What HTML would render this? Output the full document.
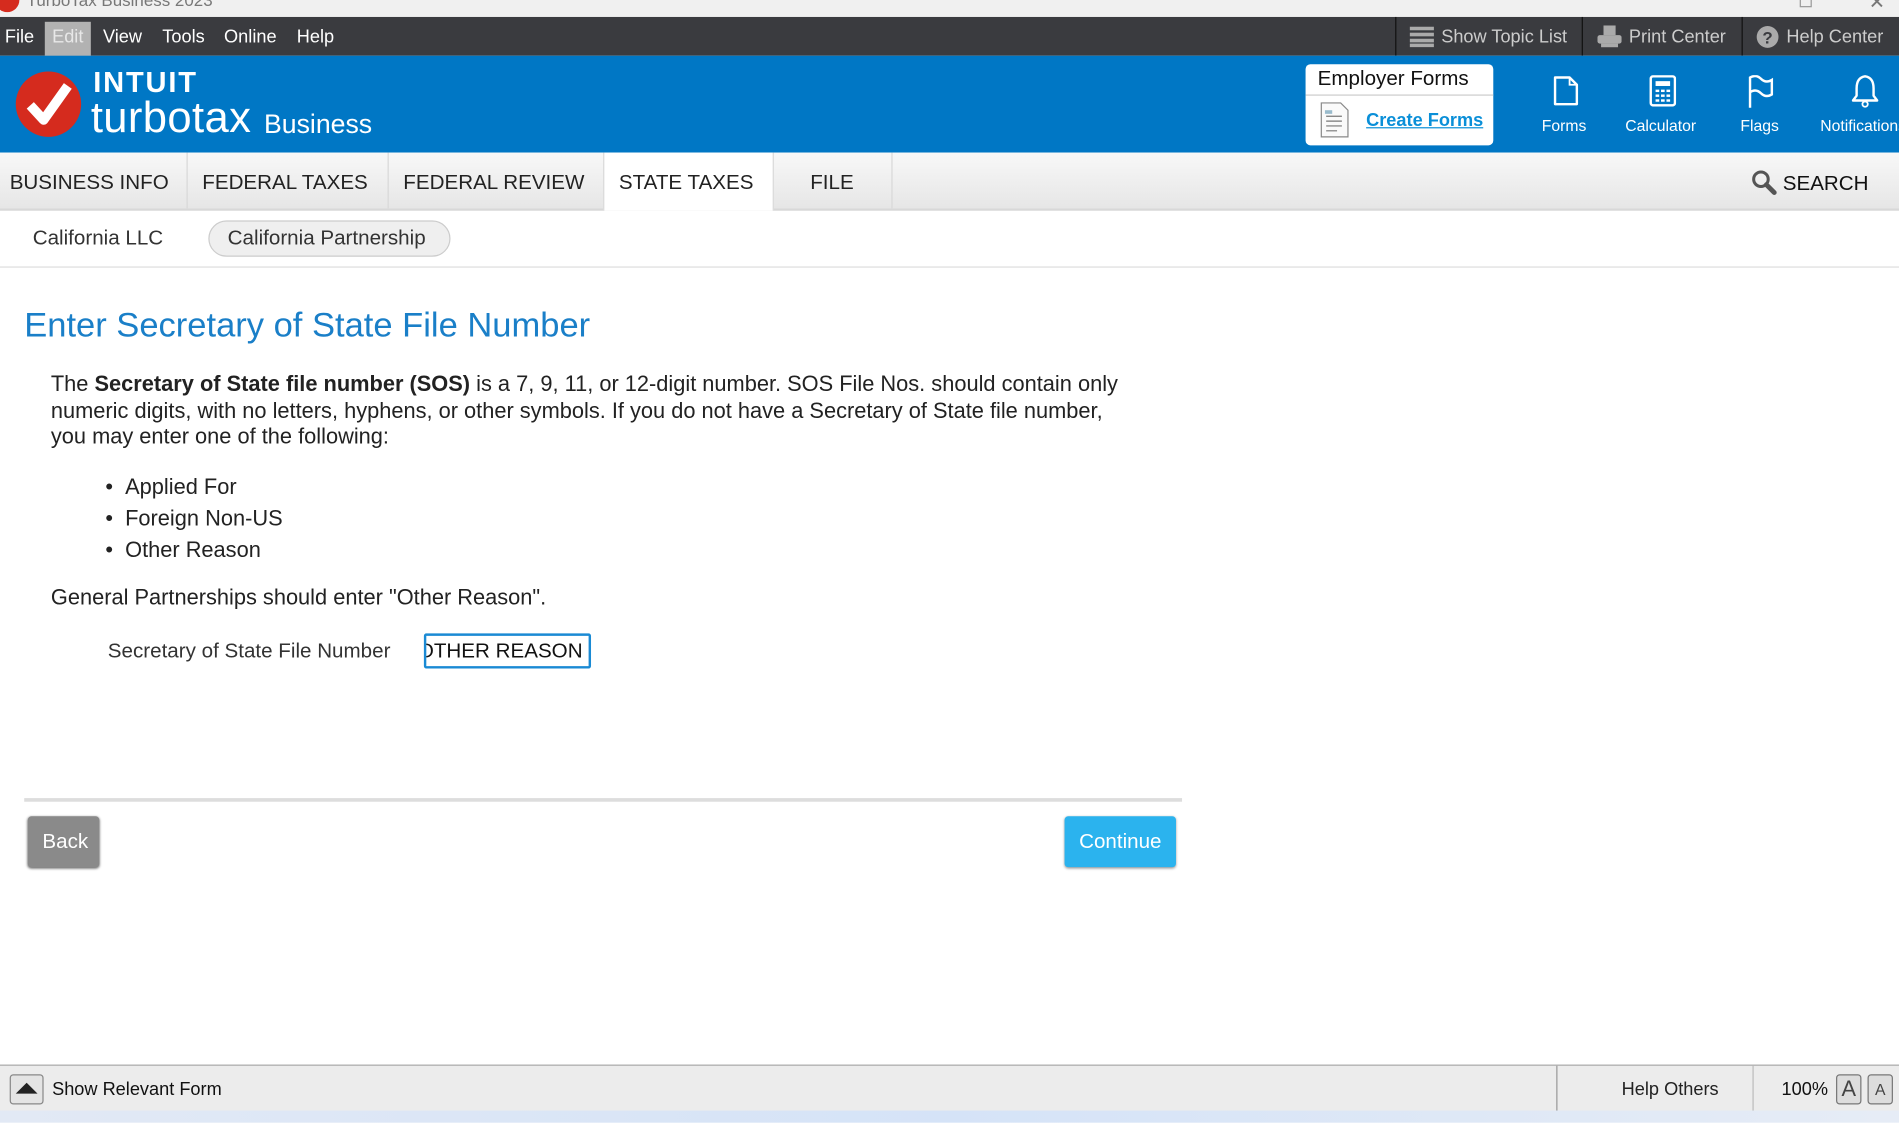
<!DOCTYPE html>
<html><head><meta charset="utf-8">
<style>
html,body{margin:0;padding:0;width:1899px;height:1123px;overflow:hidden;background:#fff;}
#w{position:absolute;left:0;top:0;width:1568px;height:927px;transform:scale(1.21110);transform-origin:0 0;font-family:"Liberation Sans",Arial,sans-serif;color:#222;}
.a{position:absolute;white-space:nowrap;}
</style></head><body><div id="w">
<div class="a" style="left:0;top:0;width:1568px;height:14px;background:#f0f0f0;overflow:hidden">
 <div class="a" style="left:-4px;top:-10px;width:20px;height:20px;border-radius:50%;background:#d52b1e"></div>
 <div class="a" style="left:22px;top:-8px;font-size:14px;color:#777">TurboTax Business 2023</div>
 <div class="a" style="left:1486px;top:-4px;width:8px;height:8px;border:1px solid #999"></div>
 <div class="a" style="left:1543px;top:-8px;font-size:16px;color:#777">✕</div>
</div>
<div class="a" style="left:0;top:14px;width:1568px;height:32px;background:#3a3b3f;font-size:15px;color:#fff">
 <div class="a" style="left:4px;top:8px">File</div>
 <div class="a" style="left:37px;top:4px;width:38px;height:28px;background:#b2b2b2"></div>
 <div class="a" style="left:43px;top:8px;color:#e8e8e8">Edit</div>
 <div class="a" style="left:85px;top:8px">View</div>
 <div class="a" style="left:134px;top:8px">Tools</div>
 <div class="a" style="left:185px;top:8px">Online</div>
 <div class="a" style="left:245px;top:8px">Help</div>
 <div class="a" style="left:1152px;top:0;width:1px;height:32px;background:#111"></div>
 <div class="a" style="left:1306px;top:0;width:1px;height:32px;background:#111"></div>
 <div class="a" style="left:1438px;top:0;width:1px;height:32px;background:#111"></div>
 <svg class="a" style="left:1164px;top:8px" width="20" height="17"><g fill="#aaa"><rect x="0" y="0" width="20" height="3"/><rect x="0" y="5" width="20" height="3"/><rect x="0" y="10" width="20" height="3"/><rect x="0" y="14" width="20" height="3"/></g></svg>
 <div class="a" style="left:1190px;top:8px;color:#ccc">Show Topic List</div>
 <svg class="a" style="left:1319px;top:7px" width="20" height="19"><g fill="#aaa"><rect x="5" y="0" width="10" height="8"/><rect x="0" y="8" width="20" height="7" rx="2"/><rect x="3" y="15" width="14" height="3"/></g></svg>
 <div class="a" style="left:1345px;top:8px;color:#ccc">Print Center</div>
 <svg class="a" style="left:1450px;top:7px" width="19" height="19"><circle cx="9.5" cy="9.5" r="9" fill="#aaa"/><text x="9.5" y="15" font-size="14" font-weight="bold" text-anchor="middle" fill="#3a3b3f" font-family="Liberation Sans">?</text></svg>
 <div class="a" style="left:1475px;top:8px;color:#ccc">Help Center</div>
</div>
<div class="a" style="left:0;top:46px;width:1568px;height:80px;background:#0077c5;color:#fff">
 <svg class="a" style="left:12px;top:12px" width="56" height="56"><circle cx="28" cy="28" r="27" fill="#d52b1e"/><path d="M13 29 L24 41 L44 13" stroke="#fff" stroke-width="8" fill="none" stroke-linejoin="round"/></svg>
 <div class="a" style="left:77px;top:9px;font-size:24px;font-weight:bold;letter-spacing:1.5px">INTUIT</div>
 <div class="a" style="left:75px;top:30px;font-size:36px;letter-spacing:0.3px">turbotax</div>
 <div class="a" style="left:218px;top:44px;font-size:22px;">Business</div>
 <div class="a" style="left:1078px;top:7px;width:155px;height:67px;background:#fff;border-radius:4px;">
  <div class="a" style="left:10px;top:2px;font-size:17px;color:#111">Employer Forms</div>
  <div class="a" style="left:0;top:25px;width:155px;height:1px;background:#ccc"></div>
  <svg class="a" style="left:12px;top:31px" width="24" height="30"><path d="M1 1 H17 L23 7 V29 H1 Z" fill="#fafafa" stroke="#888"/><g stroke="#777"><line x1="5" y1="12" x2="18" y2="12"/><line x1="5" y1="16" x2="18" y2="16"/><line x1="5" y1="20" x2="18" y2="20"/><line x1="5" y1="24" x2="14" y2="24"/></g><rect x="4" y="7" width="6" height="3" fill="#9bc"/></svg>
  <div class="a" style="left:50px;top:38px;font-size:15px;font-weight:bold;color:#0a8fd8;text-decoration:underline">Create Forms</div>
 </div>
 <svg class="a" style="left:1282px;top:16px" width="22" height="26"><path d="M2 2 H14 L20 8 V24 H2 Z" fill="none" stroke="#fff" stroke-width="2" stroke-linejoin="round"/><path d="M14 2 V8 H20" fill="none" stroke="#fff" stroke-width="1.5"/></svg>
 <div class="a" style="left:1273px;top:50px;font-size:13px">Forms</div>
 <svg class="a" style="left:1362px;top:16px" width="22" height="26"><rect x="1" y="1" width="20" height="24" rx="2" fill="none" stroke="#fff" stroke-width="2"/><rect x="5" y="5" width="12" height="4" fill="#fff"/><g fill="#fff"><rect x="5" y="12" width="3" height="2"/><rect x="9.5" y="12" width="3" height="2"/><rect x="14" y="12" width="3" height="2"/><rect x="5" y="16" width="3" height="2"/><rect x="9.5" y="16" width="3" height="2"/><rect x="14" y="16" width="3" height="2"/><rect x="5" y="20" width="3" height="2"/><rect x="9.5" y="20" width="3" height="2"/><rect x="14" y="20" width="3" height="2"/></g></svg>
 <div class="a" style="left:1342px;top:50px;font-size:13px">Calculator</div>
 <svg class="a" style="left:1443px;top:16px" width="22" height="28"><path d="M2 27 V2 Q7 -1 11 3 Q15 7 20 4 V16 Q15 19 11 15 Q7 11 2 14" fill="none" stroke="#fff" stroke-width="2"/></svg>
 <div class="a" style="left:1437px;top:50px;font-size:13px">Flags</div>
 <svg class="a" style="left:1529px;top:15px" width="22" height="28"><path d="M11 2 Q4 3 4 12 V18 L1 22 H21 L18 18 V12 Q18 3 11 2 Z" fill="none" stroke="#fff" stroke-width="2" stroke-linejoin="round"/><circle cx="11" cy="25" r="2.2" fill="none" stroke="#fff" stroke-width="1.5"/></svg>
 <div class="a" style="left:1503px;top:50px;font-size:13px">Notifications</div>
</div>
<div class="a" style="left:0;top:126px;width:1568px;height:46px;background:linear-gradient(#f8f8f8,#e6e6e6);border-bottom:2px solid #d8d8d8;font-size:17px;color:#222">
 <div class="a" style="left:154px;top:0;width:1px;height:46px;background:#d8d8d8"></div>
 <div class="a" style="left:320px;top:0;width:1px;height:46px;background:#d8d8d8"></div>
 <div class="a" style="left:498px;top:0;width:139px;height:48px;background:#fff;border-left:1px solid #d8d8d8;border-right:1px solid #d8d8d8"></div>
 <div class="a" style="left:736px;top:0;width:1px;height:46px;background:#d8d8d8"></div>
 <div class="a" style="left:8px;top:15px">BUSINESS INFO</div>
 <div class="a" style="left:167px;top:15px">FEDERAL TAXES</div>
 <div class="a" style="left:333px;top:15px">FEDERAL REVIEW</div>
 <div class="a" style="left:511px;top:15px">STATE TAXES</div>
 <div class="a" style="left:669px;top:15px">FILE</div>
 <svg class="a" style="left:1446px;top:14px" width="22" height="22"><circle cx="8" cy="8" r="6" fill="none" stroke="#555" stroke-width="2.5"/><line x1="12.5" y1="12.5" x2="19" y2="19" stroke="#555" stroke-width="4" stroke-linecap="round"/></svg>
 <div class="a" style="left:1472px;top:16px;color:#111">SEARCH</div>
</div>
<div class="a" style="left:0;top:220px;width:1568px;height:1px;background:#ddd"></div>
<div class="a" style="left:27px;top:187px;font-size:17px;color:#333">California LLC</div>
<div class="a" style="left:172px;top:182px;width:198px;height:28px;background:#efefef;border:1px solid #ccc;border-radius:15px"></div>
<div class="a" style="left:188px;top:187px;font-size:17px;color:#333">California Partnership</div>
<div class="a" style="left:20px;top:253px;font-size:28.5px;color:#1a7fc8">Enter Secretary of State File Number</div>
<div class="a" style="left:42px;top:307px;font-size:18px;line-height:21.5px;color:#222;white-space:normal;width:895px">The <b>Secretary of State file number (SOS)</b> is a 7, 9, 11, or 12-digit number. SOS File Nos. should contain only numeric digits, with no letters, hyphens, or other symbols. If you do not have a Secretary of State file number, you may enter one of the following:</div>
<div class="a" style="left:87px;top:389px;font-size:18px;line-height:26px">•&nbsp;&nbsp;Applied For<br>•&nbsp;&nbsp;Foreign Non-US<br>•&nbsp;&nbsp;Other Reason</div>
<div class="a" style="left:42px;top:483px;font-size:18px">General Partnerships should enter "Other Reason".</div>
<div class="a" style="left:89px;top:528px;font-size:17px;color:#333">Secretary of State File Number</div>
<div class="a" style="left:350px;top:523px;width:134px;height:25px;border:2px solid #1a8ad4;border-radius:2px;background:#fff;overflow:hidden">
 <div class="a" style="left:-7px;top:3px;font-size:17px;color:#111">OTHER REASON</div>
</div>
<div class="a" style="left:20px;top:659px;width:956px;height:3px;background:#ddd"></div>
<div class="a" style="left:23px;top:674px;width:59px;height:42px;background:#8a8a8a;border-radius:3px;box-shadow:0 1px 2px #666"></div>
<div class="a" style="left:35px;top:685px;font-size:17px;color:#fff">Back</div>
<div class="a" style="left:879px;top:674px;width:92px;height:42px;background:#2bb3ee;border-radius:3px;box-shadow:0 1px 2px #999"></div>
<div class="a" style="left:891px;top:685px;font-size:17px;color:#fff">Continue</div>
<div class="a" style="left:0;top:879px;width:1568px;height:38px;background:#ececec;border-top:1px solid #aaa">
 <div class="a" style="left:8px;top:7px;width:26px;height:23px;border:1px solid #888;border-radius:3px;background:#e4e4e4"></div>
 <svg class="a" style="left:12px;top:12px" width="20" height="12"><path d="M1 11 L10 2 L19 11 Z" fill="#222"/></svg>
 <div class="a" style="left:43px;top:11px;font-size:15px;color:#111">Show Relevant Form</div>
 <div class="a" style="left:1285px;top:0;width:1px;height:38px;background:#999"></div>
 <div class="a" style="left:1447px;top:0;width:1px;height:38px;background:#bbb"></div>
 <div class="a" style="left:1339px;top:11px;font-size:15px;color:#222">Help Others</div>
 <div class="a" style="left:1471px;top:11px;font-size:15px;color:#111">100%</div>
 <div class="a" style="left:1516px;top:7px;width:19px;height:23px;border:1px solid #777;border-radius:3px;background:#ddd;font-size:18px;text-align:center;line-height:23px;color:#444">A</div>
 <div class="a" style="left:1542px;top:7px;width:19px;height:23px;border:1px solid #777;border-radius:3px;background:#ddd;font-size:13px;text-align:center;line-height:23px;color:#444">A</div>
</div>
<div class="a" style="left:0;top:917px;width:1568px;height:10px;background:linear-gradient(90deg,#e2e9f5,#d5e3f7,#e6ecf6)"></div>
</div></body></html>
